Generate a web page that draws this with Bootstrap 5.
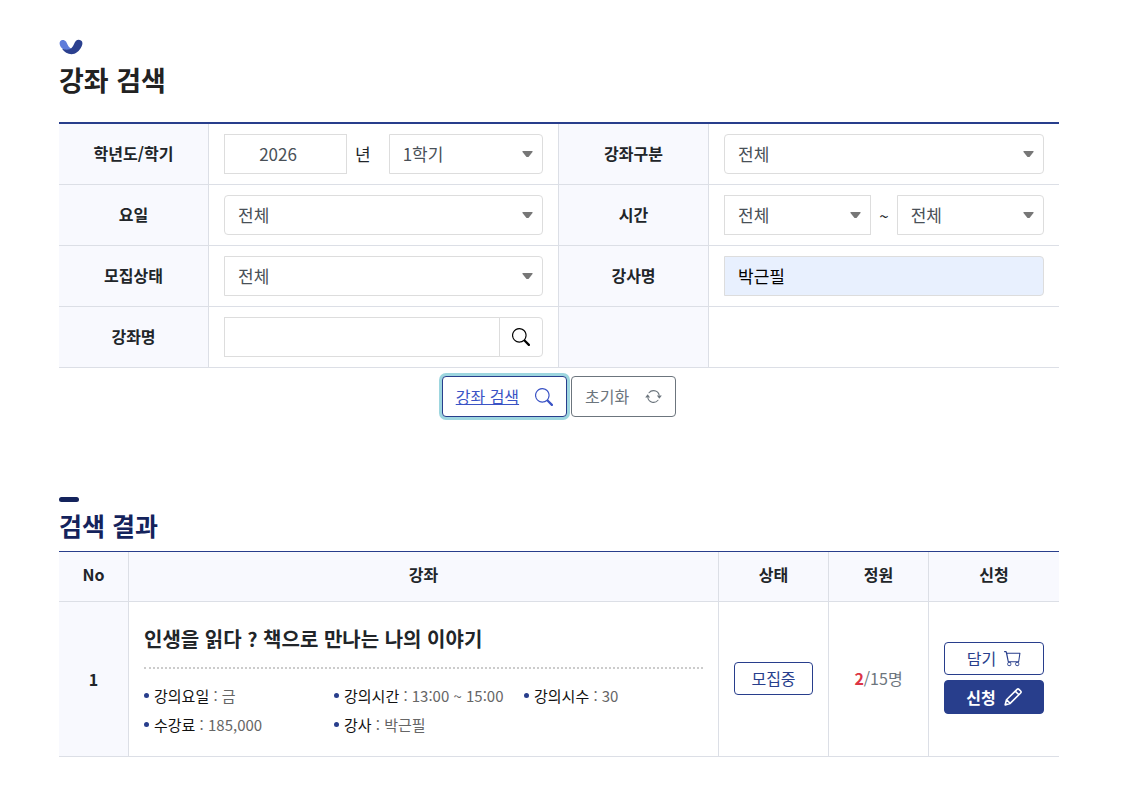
<!DOCTYPE html>
<html lang="ko">
<head>
<meta charset="utf-8">
<meta name="viewport" content="width=device-width, initial-scale=1">
<title>강좌 검색</title>
<link href="https://cdn.jsdelivr.net/npm/bootstrap@5.3.0/dist/css/bootstrap.min.css" rel="stylesheet">
<style>
  :root { --navy: #283e8c; --line: #dcdfe6; --field: #dddddd; --head: #f8f9fe; }
  body { font-family: "Noto Sans CJK KR", sans-serif; font-size: 17px; line-height: 25px; color: #212529; background: #fff; padding: 38px 67px 24px 59px; }
  .page { max-width: 1000px; }
  .page-title { font-size: 27px; line-height: 40px; font-weight: 700; color: #222; margin: 5px 0 22px; }
  .logo { display: block; width: 24px; height: 17px; }
  .result-title { font-size: 25px; line-height: 38px; font-weight: 700; color: #14235c; margin: 4px 0 7px; }
  .title-bar { width: 20px; height: 5px; border-radius: 3px; background: #14235c; }

  .grid-table { width: 100%; border-collapse: separate; border-spacing: 0; table-layout: fixed; }
  .grid-table th, .grid-table td { border: 0 solid var(--line); border-width: 0 1px 1px 0; }
  .grid-table tr > :last-child { border-right: 0; }
  .grid-table th { background: var(--head); text-align: center; font-weight: 700; font-size: 16px; }
  .search-table { border-top: 2px solid var(--navy); }
  .search-table th, .search-table td { height: 61px; padding: 10px 15px; }
  .search-table th { padding: 9px 15px 11px; }
  .result-table { border-top: 1px solid var(--navy); }
  .result-table thead th { height: 50px; padding: 10px 15px 14px; }
  .result-table td { padding: 18px 15px 20px; }
  .w-label { width: 15%; }
  .w-field { width: 35%; }

  .field.form-control, .field.form-select { height: 40px; border: 1px solid var(--field); border-radius: 4px; padding: 6px 13px; font-size: 17px; line-height: 26px; color: #495057; }
  .field.form-control { padding: 5px 13px 7px; }
  .field.form-select { padding-right: 30px; background: #fff url("data:image/svg+xml,%3Csvg xmlns='http://www.w3.org/2000/svg' viewBox='0 0 10 6'%3E%3Cpath fill='%23777' d='M0 0h10v1L6 6H4L0 1z'/%3E%3C/svg%3E") no-repeat right 9px center / 11px 6px; }
  .field.form-control.square, .field.form-select.square { border-radius: 0; }
  .field.form-control.flat-start, .field.form-select.flat-start { border-radius: 0 4px 4px 0; }
  .field.form-control.filled { background: #e8f0fe; color: #000; }
  .year-field { width: 123px; flex: none; text-align: center; }
  .year-field::-webkit-inner-spin-button { opacity: 0; }
  .year-unit { padding: 0 18px 2px 8px; }
  .find-btn { width: 44px; border: 1px solid var(--field); border-radius: 0 4px 4px 0; margin-left: -1px; background: #fff; padding: 0; color: #000; }

  .act { font-size: 16px; line-height: 25px; padding: 7px 13px; border-radius: 4px; display: inline-flex; align-items: center; gap: 16px; transition: none; }
  .act-search, .act-search:hover { color: #3a53c5; border-color: var(--navy); background: #fff; text-decoration: none; box-shadow: 0 0 0 3px #9dd6df; }
  .act-search span { text-decoration: underline; }
  .act-reset { color: #6c757d; border-color: #6c757d; background: #fff; }

  .course-name { font-size: 20px; line-height: 38px; font-weight: 700; color: #212529; margin: 0; padding-bottom: 9px; border-bottom: 2px dotted #ccc; }
  .facts { display: grid; grid-template-columns: 190px 190px 1fr; margin: 12px 0 0; padding: 0; list-style: none; font-size: 15px; line-height: 29px; color: #666; }
  .result-table td.course-cell { padding-bottom: 17px; }
  .facts li { display: flex; align-items: center; gap: 5px; white-space: nowrap; }
  .facts li::before { content: ""; width: 5px; height: 5px; border-radius: 50%; background: var(--navy); }
  .facts b { font-weight: 400; color: #111; }
  .small-btn { font-size: 16px; line-height: 25px; padding: 3px 0; border: 1px solid var(--navy); border-radius: 4px; color: var(--navy); background: #fff; width: 100%; display: flex; justify-content: center; align-items: center; gap: 8px; }
  .small-btn.solid { background: var(--navy); color: #fff; font-weight: 700; line-height: 26px; margin-top: 5px; }
  .state-btn { width: 79px; }
  .seats { color: #6c757d; font-size: 16px; }
</style>
</head>
<body>
<main class="page mx-auto">
  <svg class="logo" viewBox="0 0 24 17" aria-hidden="true">
    <path d="M1.2 3.2C2.6 1.5 5.500 1.500 7 3.600C8.600 6.200 9 9.600 12.500 10.500C10 12.800 5.500 12.600 3 10.300C1 8.300-.2 5.300 1.200 3.200Z" fill="#5f7cda"/>
    <path d="M3 10.800C6 11.800 10.200 12.300 12.500 10C14.800 7.800 15.300 4.500 17 2.800C18.500 1.300 20.700 1.700 22 2.400C23.800 3.500 23.800 5.700 22.700 8.200C20.500 13 16.500 16.200 12.500 16.200C8.700 16.200 5.300 14.200 3 10.800Z" fill="#2b408f"/>
  </svg>
  <h1 class="page-title">강좌 검색</h1>

  <form onsubmit="return false">
    <table class="grid-table search-table">
      <colgroup><col class="w-label"><col class="w-field"><col class="w-label"><col class="w-field"></colgroup>
      <tbody>
        <tr>
          <th scope="row"><label for="year">학년도/학기</label></th>
          <td>
            <div class="d-flex align-items-center">
              <input class="form-control field square year-field" type="number" id="year" value="2026">
              <span class="flex-shrink-0 year-unit">년</span>
              <select class="form-select field flat-start" aria-label="학기"><option>1학기</option><option>2학기</option></select>
            </div>
          </td>
          <th scope="row"><label for="kind">강좌구분</label></th>
          <td><select class="form-select field" id="kind"><option>전체</option></select></td>
        </tr>
        <tr>
          <th scope="row"><label for="day">요일</label></th>
          <td><select class="form-select field" id="day"><option>전체</option></select></td>
          <th scope="row"><label for="from">시간</label></th>
          <td>
            <div class="d-flex align-items-center">
              <select class="form-select field square" id="from"><option>전체</option></select>
              <span class="px-2">~</span>
              <select class="form-select field flat-start" aria-label="종료 시간"><option>전체</option></select>
            </div>
          </td>
        </tr>
        <tr>
          <th scope="row"><label for="status">모집상태</label></th>
          <td><select class="form-select field flat-start" id="status"><option>전체</option></select></td>
          <th scope="row"><label for="teacher">강사명</label></th>
          <td><input class="form-control field flat-start filled" type="text" id="teacher" value="박근필"></td>
        </tr>
        <tr>
          <th scope="row"><label for="course">강좌명</label></th>
          <td>
            <div class="d-flex">
              <input class="form-control field square" type="text" id="course">
              <button class="find-btn flex-shrink-0 d-flex align-items-center justify-content-center" type="button" aria-label="검색">
                <svg width="18" height="18" viewBox="0 0 16 16" fill="currentColor"><path d="M11.742 10.344a6.5 6.5 0 1 0-1.397 1.398h-.001c.03.04.062.078.098.115l3.850 3.850a1 1 0 0 0 1.415-1.414l-3.850-3.850a1.007 1.007 0 0 0-.115-.1zM12 6.500a5.500 5.500 0 1 1-11 0 5.500 5.500 0 0 1 11 0z"/></svg>
              </button>
            </div>
          </td>
          <th></th>
          <td></td>
        </tr>
      </tbody>
    </table>
    <div class="d-flex justify-content-center gap-1 mt-2">
      <a class="btn act act-search" href="#results"><span>강좌 검색</span>
        <svg width="18" height="18" viewBox="0 0 16 16" fill="currentColor" aria-hidden="true"><path d="M11.742 10.344a6.5 6.5 0 1 0-1.397 1.398h-.001c.03.04.062.078.098.115l3.850 3.850a1 1 0 0 0 1.415-1.414l-3.850-3.850a1.007 1.007 0 0 0-.115-.1zM12 6.500a5.500 5.500 0 1 1-11 0 5.500 5.500 0 0 1 11 0z"/></svg>
      </a>
      <button class="btn act act-reset" type="reset"><span>초기화</span>
        <svg width="17" height="17" viewBox="0 0 16 16" fill="currentColor" aria-hidden="true"><path d="M11.534 7h3.932a.25.25 0 0 1 .192.410l-1.966 2.360a.25.25 0 0 1-.384 0l-1.966-2.360a.25.25 0 0 1 .192-.410zm-11 2h3.932a.25.25 0 0 0 .192-.410L2.692 6.230a.25.25 0 0 0-.384 0L.342 8.590A.25.25 0 0 0 .534 9z"/><path fill-rule="evenodd" d="M8 3c-1.552 0-2.940.707-3.857 1.818a.5.5 0 1 1-.771-.636A6.002 6.002 0 0 1 13.917 7H12.900A5.002 5.002 0 0 0 8 3zM3.100 9a5.002 5.002 0 0 0 8.757 2.182.5.5 0 1 1 .771.636A6.002 6.002 0 0 1 2.083 9H3.100z"/></svg>
      </button>
    </div>
  </form>

  <section id="results" class="mt-5 pt-4">
    <div class="title-bar mt-2"></div>
    <h2 class="result-title">검색 결과</h2>
    <table class="grid-table result-table">
      <colgroup><col style="width:7%"><col style="width:59%"><col style="width:11%"><col style="width:10%"><col style="width:13%"></colgroup>
      <thead>
        <tr><th scope="col">No</th><th scope="col">강좌</th><th scope="col">상태</th><th scope="col">정원</th><th scope="col">신청</th></tr>
      </thead>
      <tbody>
        <tr class="align-middle">
          <th scope="row">1</th>
          <td class="course-cell">
            <h3 class="course-name">인생을 읽다 ? 책으로 만나는 나의 이야기</h3>
            <ul class="facts">
              <li><span><b>강의요일</b> : 금</span></li>
              <li><span><b>강의시간</b> : 13:00 ~ 15:00</span></li>
              <li><span><b>강의시수</b> : 30</span></li>
              <li><span><b>수강료</b> : 185,000</span></li>
              <li><span><b>강사</b> : 박근필</span></li>
            </ul>
          </td>
          <td><button class="small-btn state-btn" type="button">모집중</button></td>
          <td class="seats text-center"><strong class="text-danger">2</strong>/15명</td>
          <td>
            <button class="small-btn" type="button">담기
              <svg width="17" height="17" viewBox="0 0 16 16" fill="currentColor" aria-hidden="true"><path d="M0 1.500A.5.5 0 0 1 .5 1H2a.5.5 0 0 1 .485.379L2.890 2.500H15a.5.5 0 0 1 .485.621l-1.200 8A.5.5 0 0 1 13.800 11.500H4a.5.5 0 0 1-.485-.379L1.610 2H.5a.5.5 0 0 1-.5-.5zM3.140 3.500l1.350 7h8.920l.970-7H3.140zM5 12a1.200 1.200 0 1 0 0 2.400A1.200 1.200 0 0 0 5 12zm-2 1.200a2 2 0 1 1 4 0 2 2 0 0 1-4 0zM12.500 12a1.200 1.200 0 1 0 0 2.400 1.200 1.200 0 0 0 0-2.400zm-2 1.200a2 2 0 1 1 4 0 2 2 0 0 1-4 0z"/></svg>
            </button>
            <button class="small-btn solid" type="button">신청
              <svg width="18" height="18" viewBox="0 0 16 16" fill="none" stroke="currentColor" stroke-width="1.400" stroke-linejoin="round" aria-hidden="true"><path d="M1 15l1.200-4.600L11.600 1.200c.5-.5 1.200-.5 1.700 0l1.500 1.500c.5.5.5 1.200 0 1.700L5.500 13.700zM10 2.800l3.200 3.200M2.300 10.500l3.200 3.200"/></svg>
            </button>
          </td>
        </tr>
      </tbody>
    </table>
  </section>
</main>
<script src="https://cdn.jsdelivr.net/npm/bootstrap@5.3.0/dist/js/bootstrap.bundle.min.js"></script>
</body>
</html>
